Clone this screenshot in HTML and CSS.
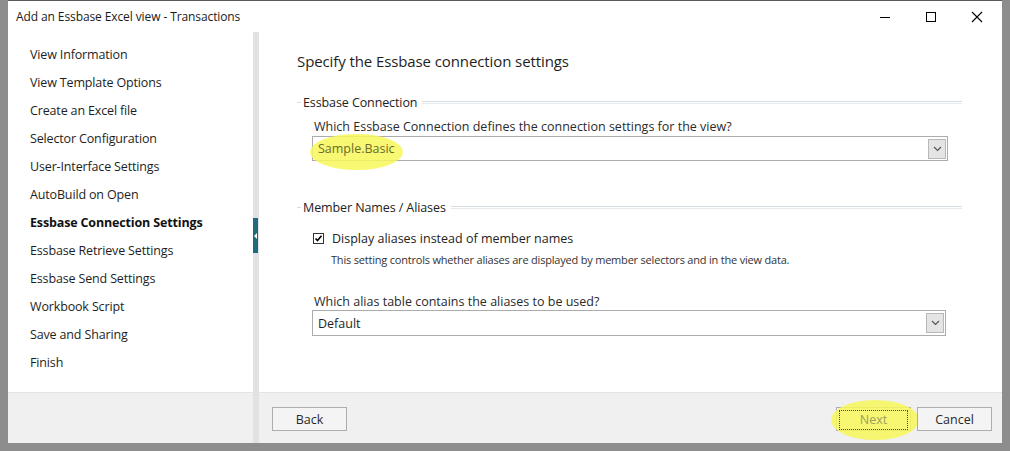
FILE: index.html
```html
<!DOCTYPE html>
<html lang="en">
<head>
<meta charset="UTF-8">
<title>Add an Essbase Excel view - Transactions</title>
<link rel="stylesheet" href="styles.css">
</head>
<body>

<div class="window">
  <div class="titlebar">
    <span class="title">Add an Essbase Excel view - Transactions</span>
    <div class="controls">
      <svg width="46" height="32" viewBox="0 0 46 32"><path d="M18 16.5h10" stroke="#000" stroke-width="1"/></svg>
      <svg width="46" height="32" viewBox="0 0 46 32"><rect x="18.5" y="11.5" width="9" height="9" fill="none" stroke="#000"/></svg>
      <svg width="46" height="32" viewBox="0 0 46 32"><path d="M18 11l10 10M28 11l-10 10" stroke="#000" stroke-width="1.1"/></svg>
    </div>
  </div>

  <div class="body">
    <ul class="nav">
      <li>View Information</li>
      <li>View Template Options</li>
      <li>Create an Excel file</li>
      <li>Selector Configuration</li>
      <li>User-Interface Settings</li>
      <li>AutoBuild on Open</li>
      <li class="current">Essbase Connection Settings</li>
      <li>Essbase Retrieve Settings</li>
      <li>Essbase Send Settings</li>
      <li>Workbook Script</li>
      <li>Save and Sharing</li>
      <li>Finish</li>
    </ul>

    <div class="splitter"><span class="grip"></span></div>

    <div class="page">
      <h1>Specify the Essbase connection settings</h1>

      <div class="group">
        <div class="group-head"><span class="tick"></span><span class="group-title">Essbase Connection</span><span class="rule"></span></div>
        <div class="field">
          <div class="label">Which Essbase Connection defines the connection settings for the view?</div>
          <div class="combo">
            <span class="glow glow-combo"></span>
            <span class="value marked">Sample.Basic</span>
            <span class="arrow"><svg width="9" height="6" viewBox="0 0 9 6"><path d="M1 1l3.5 3.5L8 1" fill="none" stroke="#555" stroke-width="1.2"/></svg></span>
          </div>
        </div>
      </div>

      <div class="group group-alias">
        <div class="group-head"><span class="tick"></span><span class="group-title">Member Names / Aliases</span><span class="rule"></span></div>
        <div class="field">
          <div class="check-row">
            <span class="checkbox"><svg width="9" height="9" viewBox="0 0 9 9"><path d="M1.5 4.5l2 2L7.5 1.8" fill="none" stroke="#000" stroke-width="1.6"/></svg></span>
            <span>Display aliases instead of member names</span>
          </div>
          <div class="hint">This setting controls whether aliases are displayed by member selectors and in the view data.</div>
          <div class="label label-alias">Which alias table contains the aliases to be used?</div>
          <div class="combo combo-alias">
            <span class="value">Default</span>
            <span class="arrow"><svg width="9" height="6" viewBox="0 0 9 6"><path d="M1 1l3.5 3.5L8 1" fill="none" stroke="#555" stroke-width="1.2"/></svg></span>
          </div>
        </div>
      </div>
    </div>
  </div>

  <div class="footer">
    <div class="footer-left"></div>
    <div class="splitter"></div>
    <div class="footer-right">
      <button class="btn">Back</button>
      <div class="right-buttons">
        <button class="btn btn-next"><span class="glow glow-next"></span><span class="focus">Next</span></button>
        <button class="btn">Cancel</button>
      </div>
    </div>
  </div>
</div>

</body>
</html>
```

FILE: styles.css
```css
body {
  margin: 0;
  padding: 0;
  background-color: #8d8d8d;
  font-family: "Open Sans", "Noto Sans", Arial, sans-serif;
  color: #1b1b1b;
}

.window {
  margin: 0 8px;
  width: 994px;
  height: 443px;
  background-color: #fff;
  display: flex;
  flex-direction: column;
  border-top: 1px solid #5a5a5a;
  box-sizing: border-box;
}

.titlebar {
  height: 31px;
  display: flex;
  align-items: center;
  justify-content: space-between;
}

.title {
  font-size: 12px;
  margin-left: 8px;
  margin-top: -1px;
  letter-spacing: -0.1px;
}

.controls {
  display: flex;
  height: 31px;
  margin-right: 2px;
}

.controls svg {
  display: block;
}

.body {
  flex: 1;
  display: flex;
}

.nav {
  list-style: none;
  margin: 0;
  padding: 9px 0 0 22px;
  width: 223px;
}

.nav li {
  height: 28px;
  line-height: 28px;
  font-size: 12.5px;
  letter-spacing: -0.15px;
  color: #1e1e1e;
}

.nav li.current {
  font-weight: bold;
  color: #111;
}

.splitter {
  width: 6px;
  background-color: #e2e2e2;
  position: relative;
}

.grip {
  position: absolute;
  left: 0;
  top: 186px;
  width: 5px;
  height: 35px;
  background-color: #1d6b7d;
}

.grip::after {
  content: "";
  position: absolute;
  left: 1px;
  top: 15px;
  border-top: 3px solid transparent;
  border-bottom: 3px solid transparent;
  border-right: 3px solid #fff;
}

.page {
  flex: 1;
  padding: 0 0 0 38px;
}

h1 {
  font-size: 15px;
  font-weight: normal;
  margin: 19px 0 0 0;
  letter-spacing: -0.1px;
  color: #1e1e1e;
}

.group {
  margin-top: 21px;
  width: 665px;
}

.group-alias {
  margin-top: 36px;
}

.group-head {
  display: flex;
  align-items: center;
  height: 20px;
}

.tick {
  width: 4px;
  border-top: 1px solid #d8dfe3;
  margin-right: 2px;
}

.group-title {
  font-size: 12.5px;
  color: #222;
  padding-right: 5px;
  letter-spacing: -0.1px;
}

.rule {
  flex: 1;
  height: 1px;
  border-top: 1px solid #d3dde2;
  border-bottom: 1px solid #e4eaee;
}

.field {
  padding-left: 17px;
}

.label {
  font-size: 12.5px;
  color: #2a2a2a;
  margin-top: 6px;
  height: 17px;
}

.label-alias {
  margin-top: 26px;
}

.combo {
  position: relative;
  height: 23px;
  width: 634px;
  margin-left: -2px;
  border: 1px solid #acacac;
  display: flex;
  align-items: center;
  justify-content: space-between;
  margin-top: 1px;
}

.combo-alias {
  width: 632px;
  height: 24px;
  margin-top: 0;
}

.value {
  position: relative;
  font-size: 12.5px;
  padding-left: 5px;
  color: #1e1e1e;
}

.value.marked {
  color: #6b6b2c;
}

.arrow {
  width: 16px;
  height: 18px;
  margin-right: 1px;
  background-color: #e4e4e4;
  border: 1px solid #b8b8b8;
  display: flex;
  align-items: center;
  justify-content: center;
}

.glow {
  position: absolute;
  background-color: rgba(247, 247, 90, 0.85);
  border-radius: 50%;
  pointer-events: none;
}

.glow-combo {
  left: -3px;
  top: -3px;
  width: 93px;
  height: 36px;
}

.check-row {
  display: flex;
  align-items: center;
  font-size: 12.5px;
  color: #222;
  margin-top: 13px;
  margin-left: -1px;
}

.checkbox {
  width: 9px;
  height: 9px;
  border: 1px solid #333;
  margin-right: 8px;
  display: flex;
}

.hint {
  font-size: 11px;
  color: #333;
  margin: 5px 0 0 17px;
  letter-spacing: -0.2px;
}

.footer {
  height: 50px;
  display: flex;
  background-color: #f0f0f0;
  border-top: 1px solid #e3e3e3;
}

.footer-left {
  width: 245px;
}

.footer-right {
  flex: 1;
  display: flex;
  justify-content: space-between;
  align-items: center;
  padding: 0 10px 0 13px;
}

.right-buttons {
  display: flex;
  gap: 6px;
}

.btn {
  position: relative;
  width: 75px;
  height: 24px;
  border: 1px solid #adadad;
  background-color: #f4f4f4;
  font-family: "Open Sans", "Noto Sans", Arial, sans-serif;
  font-size: 12.5px;
  color: #2a2a2a;
  padding: 0;
  margin-top: 2px;
}

.btn-next {
  color: #9e9e60;
}

.focus {
  position: relative;
  display: block;
  margin: 2px;
  height: 18px;
  line-height: 18px;
  border: 1px dotted #444;
}

.glow-next {
  left: -6px;
  top: -8px;
  width: 88px;
  height: 40px;
}
```
